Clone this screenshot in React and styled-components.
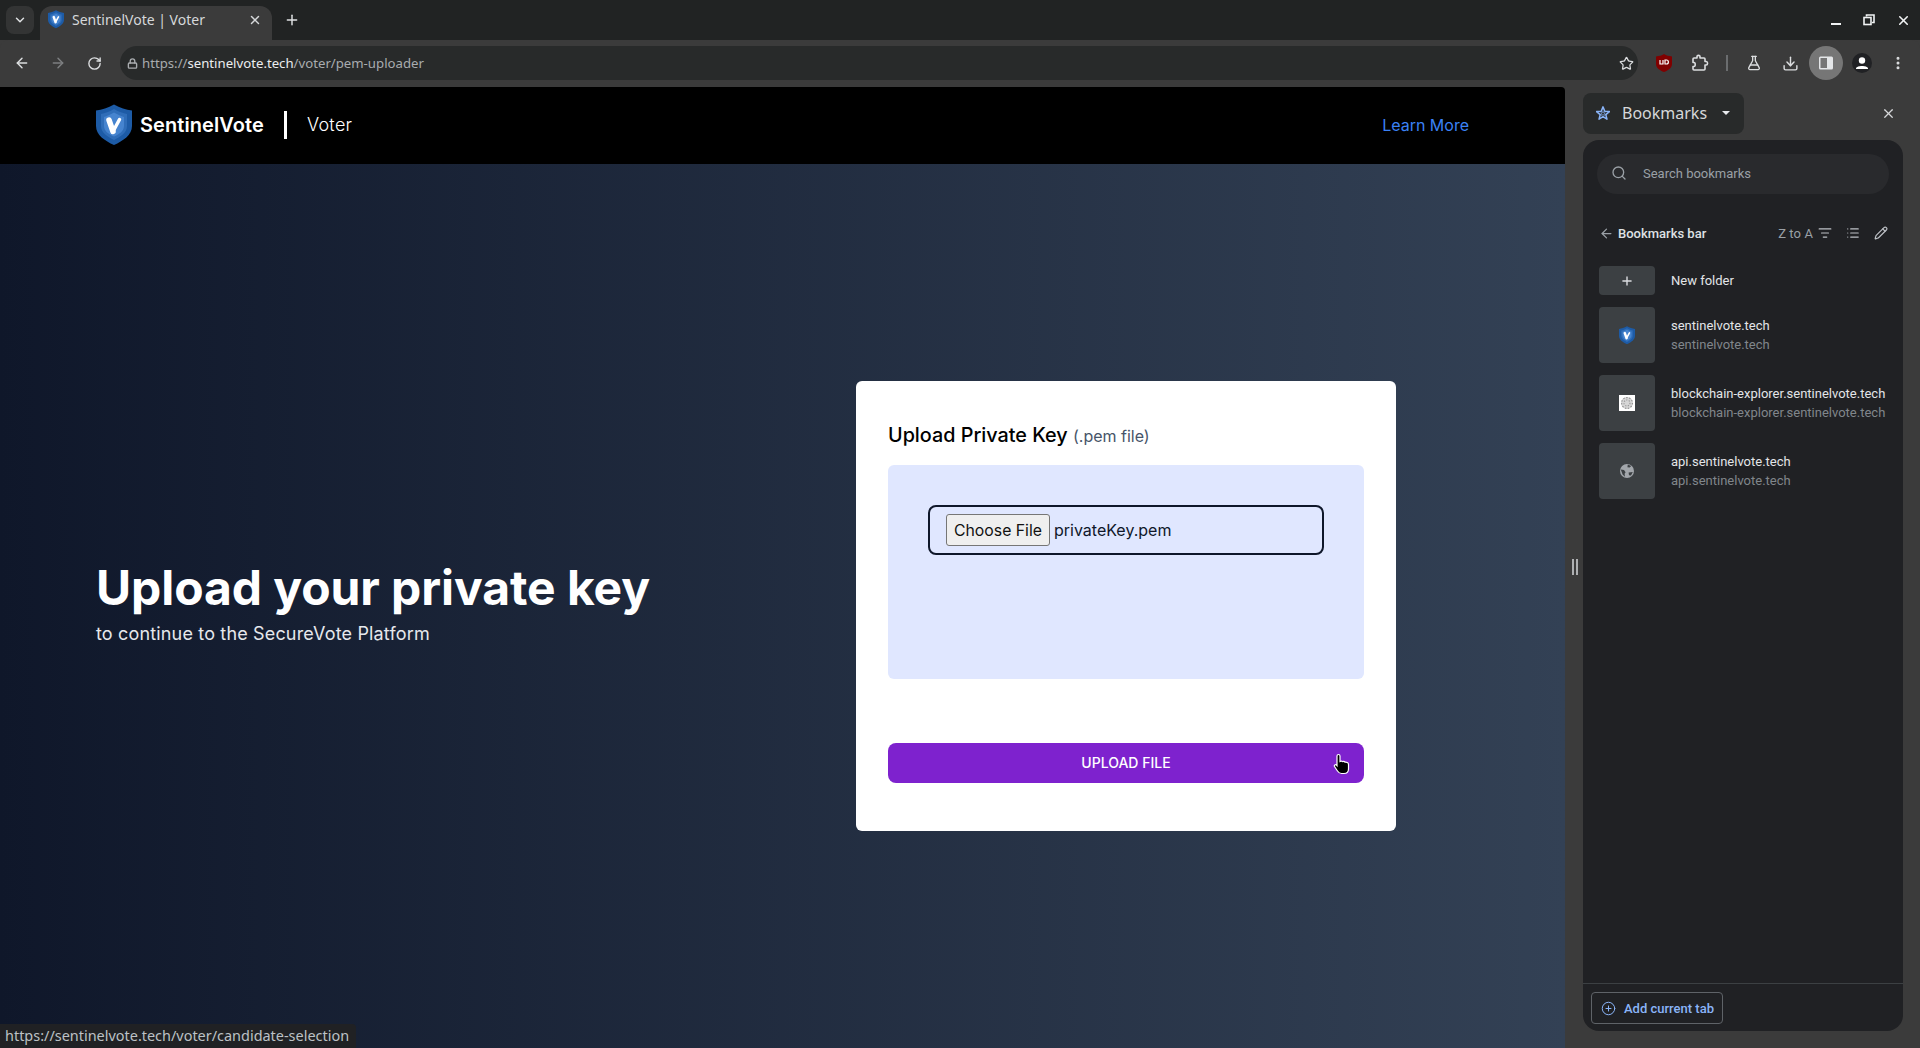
import React from "react";
import styled, { createGlobalStyle } from "styled-components";
import {
  ArrowLeft,
  ArrowRight,
  ChevronDown,
  CirclePlus,
  Download,
  EllipsisVertical,
  FlaskConical,
  List,
  ListFilter,
  Lock,
  Pencil,
  Plus,
  RotateCw,
  Search,
  Star,
  X,
} from "lucide-react";

const GlobalStyle = createGlobalStyle`
  html, body {
    margin: 0;
    padding: 0;
    background: #3b3b3b;
    overflow: hidden;
  }
  * {
    box-sizing: border-box;
  }
`;

const Window = styled.div`
  position: relative;
  width: 1920px;
  height: 1048px;
  display: flex;
  flex-direction: column;
  overflow: hidden;
  font-family: "Inter", "Liberation Sans", sans-serif;
`;

const TabStrip = styled.div`
  height: 40px;
  flex: none;
  display: flex;
  align-items: flex-end;
  padding-left: 6px;
  background: #212323;
`;

const TabSearch = styled.div`
  width: 28px;
  height: 28px;
  margin-bottom: 6px;
  display: flex;
  align-items: center;
  justify-content: center;
  border-radius: 8px;
  background: #333434;
  color: #dfe1e3;
`;

const Tab = styled.div`
  width: 232px;
  height: 34px;
  margin-left: 6px;
  padding: 0 10px 7px 8px;
  display: flex;
  align-items: center;
  border-radius: 12px 12px 0 0;
  background: #3b3b3b;
  color: #d6d8da;
  font: 400 14px "Noto Sans", sans-serif;
`;

const TabTitle = styled.span`
  flex: 1;
  margin-left: 8px;
  white-space: nowrap;
`;

const NewTab = styled.div`
  width: 28px;
  height: 28px;
  margin: 0 0 6px 6px;
  display: flex;
  align-items: center;
  justify-content: center;
  color: #dfe1e3;
`;

const WindowControls = styled.div`
  margin-left: auto;
  height: 40px;
  width: 90px;
  padding-right: 9px;
  display: flex;
  align-items: center;
  justify-content: space-between;
  color: #f1f3f4;
`;

const Toolbar = styled.div`
  height: 47px;
  flex: none;
  padding: 0 4px 1px;
  display: flex;
  align-items: center;
  background: #3b3b3b;
  border-radius: 8px 8px 0 0;
`;

const ToolButton = styled.div`
  width: 36px;
  height: 34px;
  flex: none;
  display: flex;
  align-items: center;
  justify-content: center;
  color: ${(p) => (p.$dim ? "#7d7f81" : "#dcdee0")};
`;

const ActiveCircle = styled.div`
  width: 34px;
  height: 34px;
  display: flex;
  align-items: center;
  justify-content: center;
  border-radius: 50%;
  background: #767676;
`;

const Omnibox = styled.div`
  flex: 1;
  height: 34px;
  margin: 0 8px;
  padding: 0 0 0 7px;
  display: flex;
  align-items: center;
  gap: 4px;
  border-radius: 17px;
  background: #282a2a;
  color: #a9acaf;
  font: 400 13.2px "Noto Sans", sans-serif;
`;

const UrlText = styled.div`
  flex: 1;
  white-space: nowrap;
  b {
    font-weight: 400;
    color: #eceef0;
  }
`;

const OmniStar = styled.div`
  width: 24px;
  flex: none;
  display: flex;
  justify-content: center;
  color: #dcdee0;
`;

const ToolDivider = styled.div`
  width: 2px;
  height: 16px;
  margin: 0 8px 0 8px;
  flex: none;
  background: #6b6d6f;
`;

const Body = styled.div`
  flex: 1;
  min-height: 0;
  display: flex;
`;

const Page = styled.div`
  width: 1565px;
  flex: none;
  display: flex;
  flex-direction: column;
  border-radius: 0 4px 0 0;
  overflow: hidden;
`;

const SiteHeader = styled.header`
  height: 77px;
  flex: none;
  padding: 0 96px 2px;
  display: flex;
  align-items: center;
  background: #000;
  color: #fff;
`;

const Brand = styled.div`
  margin-left: 8px;
  font-size: 20px;
  font-weight: 600;
  letter-spacing: 0.08px;
`;

const BrandDivider = styled.div`
  width: 3px;
  height: 28px;
  margin: 0 20px;
  background: #fff;
`;

const Role = styled.div`
  font-size: 18px;
  font-weight: 300;
  letter-spacing: 0.3px;
`;

const LearnMore = styled.a`
  margin-left: auto;
  font-size: 16px;
  color: #3b82f6;
`;

const Hero = styled.main`
  flex: 1;
  padding: 0 169px 0 96px;
  display: flex;
  align-items: center;
  justify-content: space-between;
  background: linear-gradient(to right, #0f172a, #334155);
`;

const Intro = styled.div`
  color: #fff;
`;

const Headline = styled.h1`
  margin: 0;
  font-size: 48px;
  line-height: 48px;
  font-weight: 700;
  letter-spacing: -0.08px;
`;

const Subline = styled.p`
  margin: 8px 0 0;
  font-size: 18px;
  line-height: 28px;
  letter-spacing: 0.16px;
  color: #e6e8ec;
`;

const Card = styled.section`
  width: 540px;
  height: 450px;
  padding: 42px 32px 0;
  border-radius: 6px;
  background: #fff;
`;

const CardTitle = styled.h2`
  margin: 0 0 17px;
  font-size: 19.8px;
  line-height: 24px;
  font-weight: 500;
  color: #000;
  span {
    font-size: 16px;
    font-weight: 400;
    color: #475569;
  }
`;

const DropArea = styled.div`
  height: 214px;
  padding: 40px;
  border-radius: 6px;
  background: #e0e7ff;
`;

const FileField = styled.div`
  height: 50px;
  padding: 0 16px;
  display: flex;
  align-items: center;
  gap: 4px;
  border: 2px solid #0f172a;
  border-radius: 8px;
  font-size: 16px;
  color: #0f172a;
`;

const ChooseButton = styled.button`
  height: 32px;
  width: 104px;
  padding: 0;
  border: 1px solid #767676;
  border-radius: 3px;
  background: #efefef;
  font: 400 15.8px "Inter", sans-serif;
  color: #111;
`;

const UploadButton = styled.button`
  width: 100%;
  height: 40px;
  margin-top: 64px;
  padding: 0 0 2px;
  border: 0;
  border-radius: 8px;
  background: #7e22ce;
  color: #fff;
  font: 500 14px "Inter", sans-serif;
  text-transform: uppercase;
`;

const SidePanel = styled.aside`
  flex: 1;
  position: relative;
  padding: 6px 17px 17px 18px;
  display: flex;
  flex-direction: column;
  gap: 6px;
  background: #3b3b3b;
  font-family: "Roboto", "Liberation Sans", sans-serif;
`;

const ResizeHandle = styled.div`
  position: absolute;
  left: 7px;
  top: 472px;
  width: 6px;
  height: 16px;
  border-left: 2px solid #aeb0b2;
  border-right: 2px solid #aeb0b2;
`;

const PanelHeader = styled.div`
  height: 41px;
  flex: none;
  display: flex;
  align-items: center;
  color: #e8eaed;
`;

const PanelPicker = styled.div`
  width: 161px;
  height: 41px;
  padding: 0 0 2px 13px;
  display: flex;
  align-items: center;
  border-radius: 8px;
  background: #282a2a;
  font: 400 16px "Noto Sans", sans-serif;
  color: #d6d8da;
`;

const PickerLabel = styled.span`
  margin-left: 12px;
`;

const Caret = styled.span`
  width: 0;
  height: 0;
  margin-left: 15px;
  border-left: 4px solid transparent;
  border-right: 4px solid transparent;
  border-top: 4px solid #e8eaed;
`;

const PanelClose = styled.div`
  margin-left: auto;
  margin-right: 7px;
  display: flex;
  color: #d6d8da;
`;

const BookmarkPanel = styled.div`
  flex: 1;
  min-height: 0;
  display: flex;
  flex-direction: column;
  border-radius: 16px;
  background: #202124;
`;

const SearchBox = styled.div`
  height: 40px;
  margin: 14px 14px 0;
  padding: 0 0 2px 14px;
  display: flex;
  align-items: center;
  gap: 16px;
  border-radius: 20px;
  background: #292a2d;
  color: #9aa0a6;
  font-size: 13px;
`;

const BarRow = styled.div`
  height: 20px;
  margin: 29px 15px 0 16px;
  display: flex;
  align-items: center;
  color: #9aa0a6;
  font-size: 13px;
`;

const BarTitle = styled.span`
  margin-left: 4px;
  flex: 1;
  font-weight: 500;
  color: #dfe1e5;
  font-size: 13px;
`;

const BarTools = styled.div`
  display: flex;
  align-items: center;
  gap: 5px;
  letter-spacing: 0.1px;
`;

const BarIcon = styled.span`
  display: flex;
  margin-left: ${(p) => p.$gap || 0}px;
  color: #bdc1c6;
`;

const Items = styled.div`
  margin: 23px 0 0 16px;
  display: flex;
  flex-direction: column;
  gap: 12px;
`;

const Item = styled.div`
  display: flex;
  align-items: center;
  gap: 16px;
`;

const Thumb = styled.div`
  width: 56px;
  height: ${(p) => (p.$short ? 29 : 56)}px;
  flex: none;
  display: flex;
  align-items: center;
  justify-content: center;
  border-radius: 4px;
  background: #3c4043;
  color: #dadce0;
`;

const ItemText = styled.div`
  font-size: 13px;
  line-height: 19px;
  color: #e3e5e8;
  white-space: nowrap;
`;

const ItemSub = styled.div`
  color: #80868b;
`;

const PanelFooter = styled.div`
  margin-top: auto;
  height: 48px;
  padding: 8px 8px;
  border-top: 1px solid #3c4043;
`;

const AddTab = styled.div`
  width: 132px;
  height: 32px;
  padding-left: 9px;
  display: flex;
  align-items: center;
  gap: 8px;
  border: 1px solid #5f6368;
  border-radius: 4px;
  color: #8ab4f8;
  font-size: 13px;
  font-weight: 500;
`;

const StatusBubble = styled.div`
  position: absolute;
  left: 0;
  bottom: 0;
  height: 24px;
  padding: 0 7px 2px 5px;
  display: flex;
  align-items: center;
  border-radius: 0 4px 0 0;
  background: #202124;
  color: #bdc1c6;
  font: 400 14.45px "Noto Sans", sans-serif;
`;

const Pointer = styled.div`
  position: absolute;
  left: 1333px;
  top: 753px;
  display: flex;
`;

function ShieldLogo({ size = 36 }) {
  return (
    <svg width={size} height={(size * 41) / 36} viewBox="0 0 36 41">
      <path d="M18 0.5 C24 4 30 5.5 36 6.5 V22 C36 31 27 37 18 41 C9 37 0 31 0 22 V6.5 C6 5.5 12 4 18 0.5Z" fill="#1d5ba6" />
      <path d="M18 5 C23 8 27 9 31 10 V22 C31 29 24 33 18 36 C12 33 5 29 5 22 V10 C9 9 13 8 18 5Z" fill="#2f6db8" />
      <path d="M18 8.5 C22 11 25 12 28 13 V22 C28 27 23 30.5 18 32.5 C13 30.5 8 27 8 22 V13 C11 12 14 11 18 8.5Z" fill="#4684cf" />
      <path d="M13 16 L17 27.5" fill="none" stroke="#fff" strokeWidth="5.5" strokeLinecap="round" />
      <path d="M17 27.5 L23.5 15.5" fill="none" stroke="#fff" strokeWidth="3.5" strokeLinecap="round" />
    </svg>
  );
}

function WindowRestore() {
  return (
    <svg width="12" height="12" viewBox="0 0 12 12" fill="none" stroke="currentColor" strokeWidth="1.6">
      <path d="M3.5 2.5V1H11V8.5H9" />
      <rect x="1" y="3.5" width="7" height="7" />
    </svg>
  );
}

function UBlock() {
  return (
    <svg width="16" height="18" viewBox="0 0 16 18">
      <path d="M8 0 C10 1.5 13 2 16 2.5 V10 C16 14 12 16.5 8 18 C4 16.5 0 14 0 10 V2.5 C3 2 6 1.5 8 0Z" fill="#800000" />
      <path d="M4 6 V10 H7 V6 M9 6 V10 H10.5 C13 10 13 6 10.5 6Z" fill="none" stroke="#fff" strokeWidth="1.2" />
    </svg>
  );
}

function ExtensionIcon() {
  return (
    <svg width="18" height="18" viewBox="0 0 18 18" fill="none" stroke="currentColor" strokeWidth="1.6" strokeLinejoin="round">
      <path d="M3 4 H6 V2.6 C6 1 9 1 9 2.6 V4 H13 C13.6 4 14 4.4 14 5 V7.5 H15.2 C17 7.5 17 11 15.2 11 H14 V15 C14 15.6 13.6 16 13 16 H3 C2.4 16 2 15.6 2 15 V12.5 H3 C4.6 12.5 4.6 8.5 3 8.5 H2 V5 C2 4.4 2.4 4 3 4Z" />
    </svg>
  );
}

function PanelIcon() {
  return (
    <svg width="16" height="16" viewBox="0 0 16 16">
      <rect x="1" y="1.5" width="14" height="13" rx="1.5" fill="#e4e6e8" />
      <rect x="2.5" y="3" width="6.5" height="10" fill="#767676" />
    </svg>
  );
}

function ProfileIcon() {
  return (
    <svg width="20" height="20" viewBox="0 0 20 20">
      <circle cx="10" cy="10" r="10" fill="#202124" />
      <circle cx="10" cy="7.5" r="3.2" fill="#fff" />
      <path d="M4 15.5 C4 12 16 12 16 15.5 V16 H4Z" fill="#fff" />
    </svg>
  );
}

function SparkStar() {
  return (
    <svg width="14" height="14" viewBox="0 0 24 24" fill="none" stroke="#8ab4f8" strokeLinejoin="round">
      <path d="M12 1.5 L15 9 L23 9.6 L16.8 14.8 L18.8 22.5 L12 18.2 L5.2 22.5 L7.2 14.8 L1 9.6 L9 9Z" strokeWidth="2.6" />
      <path d="M12 9 L13.2 11.6 L15.8 11.9 L13.9 13.7 L14.5 16.2 L12 15 L9.5 16.2 L10.1 13.7 L8.2 11.9 L10.8 11.6Z" strokeWidth="1.1" />
    </svg>
  );
}

function QrFavicon() {
  return (
    <svg width="16" height="16" viewBox="0 0 16 16">
      <rect width="16" height="16" fill="#fff" />
      <circle cx="8" cy="8" r="6" fill="#d6d6d6" />
      <circle cx="8" cy="8" r="5.4" fill="none" stroke="#8e8e8e" strokeWidth="1.1" strokeDasharray="1.4 1.6" />
      <circle cx="8" cy="8" r="3" fill="none" stroke="#9a9a9a" strokeWidth="1.2" strokeDasharray="1.2 1.4" />
    </svg>
  );
}

function GlobeFavicon() {
  return (
    <svg width="16" height="16" viewBox="0 0 16 16">
      <circle cx="8" cy="8" r="7" fill="#a2a6ab" />
      <path d="M1.8 6.5 L5 7 L6.6 9.2 L5.6 10.8 L6 13.8 L3.6 11.5 Z M8.8 1.6 L12.2 3 L10.6 4.6 L8.4 4.2Z M9.6 9.4 L13.8 9 L12 12.4 L10 12.2Z" fill="#3c4043" />
    </svg>
  );
}

function HandCursor() {
  return (
    <svg width="18" height="22" viewBox="0 0 18 22">
      <path
        d="M5.5 1.5 C6.6 1.5 7 2.3 7 3 V8.5 C8 8 9 8 9.6 8.6 C10.6 8.2 11.6 8.4 12.1 9.2 C13.4 8.9 15.5 9.6 15.5 11.5 V16 C15.5 18.8 13.5 20.5 11 20.5 H8.5 C6.5 20.5 5.5 19.5 4.5 18 L1.5 13.5 C0.8 12.3 2.4 11 3.5 12 L4 12.6 V3 C4 2.3 4.4 1.5 5.5 1.5Z"
        fill="#000"
        stroke="#fff"
        strokeWidth="1.2"
      />
    </svg>
  );
}

const bookmarks = [
  { url: "sentinelvote.tech", icon: <ShieldLogo size={16} /> },
  { url: "blockchain-explorer.sentinelvote.tech", icon: <QrFavicon /> },
  { url: "api.sentinelvote.tech", icon: <GlobeFavicon /> },
];

export default function App() {
  return (
    <Window>
      <GlobalStyle />
      <TabStrip>
        <TabSearch>
          <ChevronDown size={14} strokeWidth={2.5} />
        </TabSearch>
        <Tab>
          <ShieldLogo size={16} />
          <TabTitle>SentinelVote | Voter</TabTitle>
          <X size={14} strokeWidth={2.5} />
        </Tab>
        <NewTab>
          <Plus size={16} strokeWidth={2.2} />
        </NewTab>
        <WindowControls>
          <svg width="12" height="12" viewBox="0 0 12 12">
            <rect x="1" y="9" width="10" height="2" fill="currentColor" />
          </svg>
          <WindowRestore />
          <X size={15} strokeWidth={2.5} />
        </WindowControls>
      </TabStrip>

      <Toolbar>
        <ToolButton>
          <ArrowLeft size={16} strokeWidth={2.2} />
        </ToolButton>
        <ToolButton $dim>
          <ArrowRight size={16} strokeWidth={2.2} />
        </ToolButton>
        <ToolButton>
          <RotateCw size={15} strokeWidth={2.2} />
        </ToolButton>
        <Omnibox>
          <Lock size={11} strokeWidth={3} />
          <UrlText>
            https://<b>sentinelvote.tech</b>/voter/pem-uploader
          </UrlText>
          <OmniStar>
            <Star size={15} strokeWidth={2} />
          </OmniStar>
        </Omnibox>
        <ToolButton>
          <UBlock />
        </ToolButton>
        <ToolButton>
          <ExtensionIcon />
        </ToolButton>
        <ToolDivider />
        <ToolButton>
          <FlaskConical size={16} strokeWidth={2} />
        </ToolButton>
        <ToolButton>
          <Download size={17} strokeWidth={2} />
        </ToolButton>
        <ToolButton>
          <ActiveCircle>
            <PanelIcon />
          </ActiveCircle>
        </ToolButton>
        <ToolButton>
          <ProfileIcon />
        </ToolButton>
        <ToolButton>
          <EllipsisVertical size={16} strokeWidth={2.5} />
        </ToolButton>
      </Toolbar>

      <Body>
        <Page>
          <SiteHeader>
            <ShieldLogo />
            <Brand>SentinelVote</Brand>
            <BrandDivider />
            <Role>Voter</Role>
            <LearnMore>Learn More</LearnMore>
          </SiteHeader>
          <Hero>
            <Intro>
              <Headline>Upload your private key</Headline>
              <Subline>to continue to the SecureVote Platform</Subline>
            </Intro>
            <Card>
              <CardTitle>
                Upload Private Key <span>(.pem file)</span>
              </CardTitle>
              <DropArea>
                <FileField>
                  <ChooseButton>Choose File</ChooseButton>
                  privateKey.pem
                </FileField>
              </DropArea>
              <UploadButton>Upload File</UploadButton>
            </Card>
          </Hero>
        </Page>

        <SidePanel>
          <ResizeHandle />
          <PanelHeader>
            <PanelPicker>
              <SparkStar />
              <PickerLabel>Bookmarks</PickerLabel>
              <Caret />
            </PanelPicker>
            <PanelClose>
              <X size={15} strokeWidth={2} />
            </PanelClose>
          </PanelHeader>
          <BookmarkPanel>
            <SearchBox>
              <Search size={16} strokeWidth={2} />
              Search bookmarks
            </SearchBox>
            <BarRow>
              <ArrowLeft size={15} strokeWidth={2} />
              <BarTitle>Bookmarks bar</BarTitle>
              <BarTools>
                Z to A
                <BarIcon>
                  <ListFilter size={14} strokeWidth={2} />
                </BarIcon>
                <BarIcon $gap={9}>
                  <List size={14} strokeWidth={2} />
                </BarIcon>
                <BarIcon $gap={9}>
                  <Pencil size={14} strokeWidth={2} />
                </BarIcon>
              </BarTools>
            </BarRow>
            <Items>
              <Item>
                <Thumb $short>
                  <Plus size={14} strokeWidth={2.4} />
                </Thumb>
                <ItemText>New folder</ItemText>
              </Item>
              {bookmarks.map((b) => (
                <Item key={b.url}>
                  <Thumb>{b.icon}</Thumb>
                  <ItemText>
                    {b.url}
                    <ItemSub>{b.url}</ItemSub>
                  </ItemText>
                </Item>
              ))}
            </Items>
            <PanelFooter>
              <AddTab>
                <CirclePlus size={15} strokeWidth={1.6} />
                Add current tab
              </AddTab>
            </PanelFooter>
          </BookmarkPanel>
        </SidePanel>
      </Body>

      <StatusBubble>https://sentinelvote.tech/voter/candidate-selection</StatusBubble>
      <Pointer>
        <HandCursor />
      </Pointer>
    </Window>
  );
}
